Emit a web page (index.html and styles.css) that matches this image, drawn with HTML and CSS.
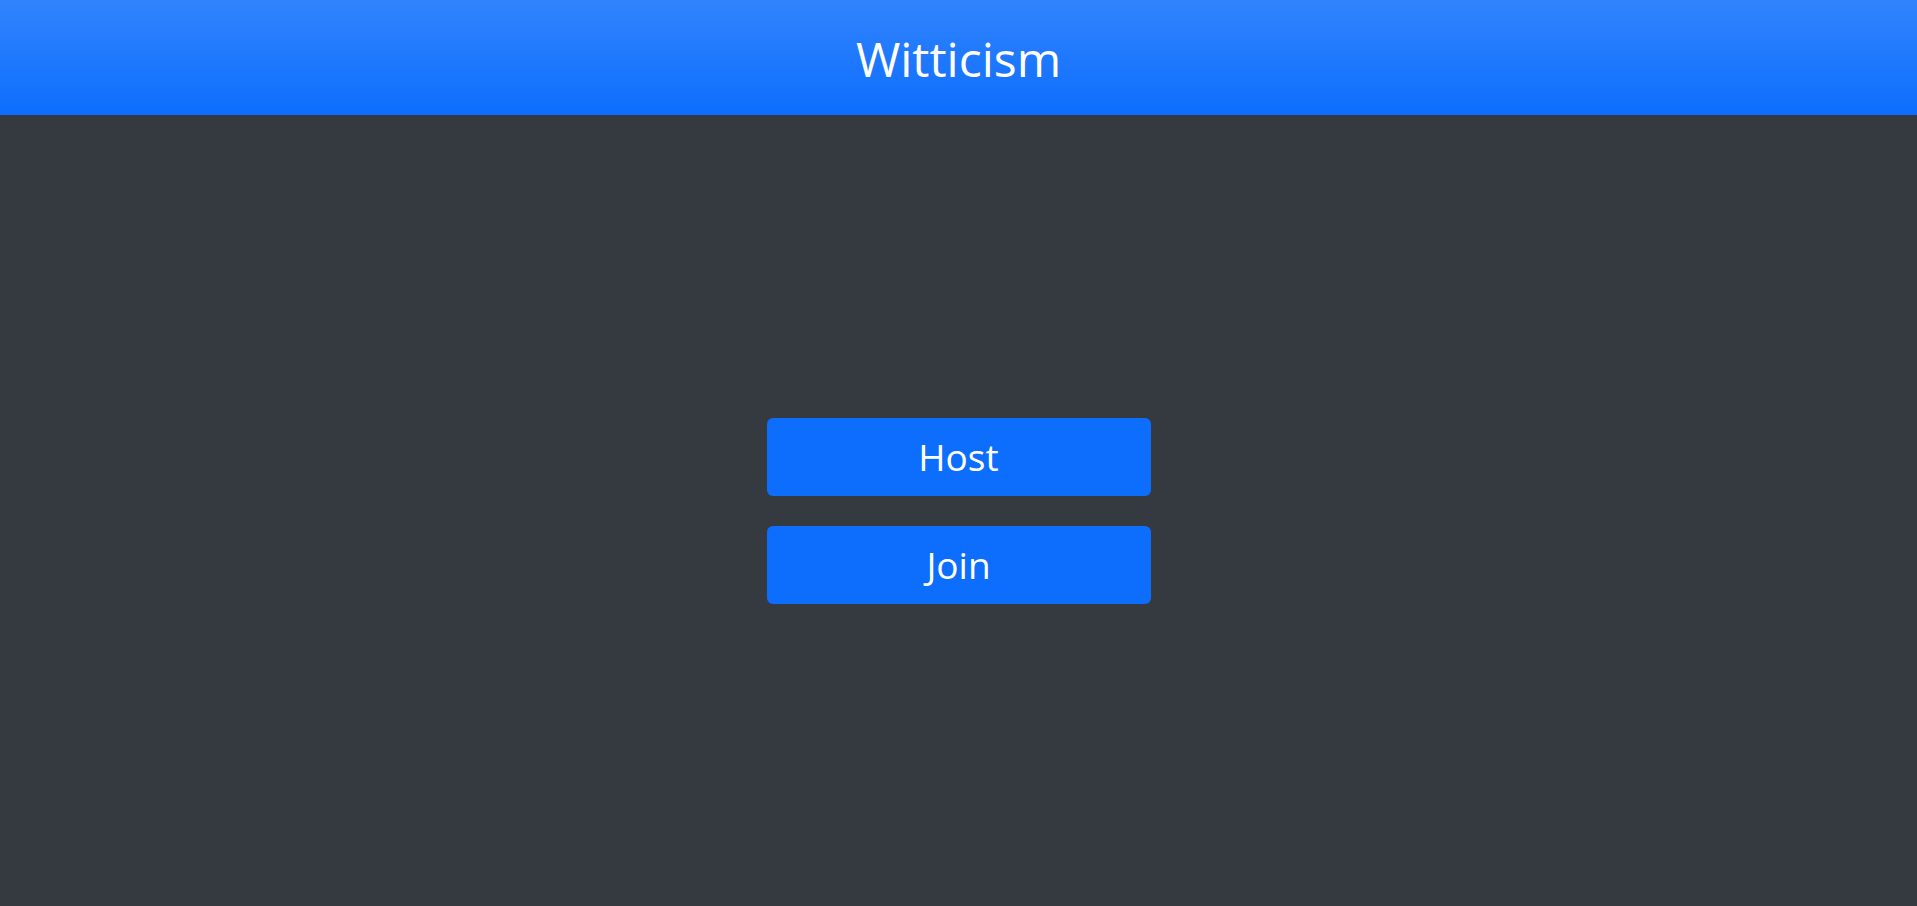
FILE: index.html
```html
<!DOCTYPE html>
<html lang="en">
<head>
<meta charset="utf-8">
<title>Witticism</title>
<link rel="stylesheet" href="styles.css">
</head>
<body>
<header class="topbar"><h1 class="title">Witticism</h1></header>
<main class="main">
  <div class="actions">
    <button class="btn">Host</button>
    <button class="btn">Join</button>
  </div>
</main>
</body>
</html>
```
FILE: styles.css
```css
html, body { margin: 0; height: 100%; }
body {
  background: #343a40;
  font-family: "Open Sans", "Noto Sans", sans-serif;
  display: flex;
  flex-direction: column;
  color: #fff;
}
.topbar {
  height: 115px;
  flex: none;
  background: #0d6efd linear-gradient(180deg, rgba(255,255,255,.15), rgba(255,255,255,0));
  display: flex;
  align-items: center;
  justify-content: center;
}
.title {
  margin: 0;
  font-weight: 400;
  font-size: 48px;
  line-height: 1;
  padding-top: 3px;
}
.main {
  flex: 1;
  display: flex;
  align-items: center;
  justify-content: center;
}
.actions {
  display: flex;
  flex-direction: column;
  gap: 30px;
  width: 384px;
}
.btn {
  height: 78px;
  border: none;
  border-radius: 6px;
  background: #0d6efd;
  color: #fff;
  font-family: inherit;
  font-size: 37px;
  padding: 0;
}
```
